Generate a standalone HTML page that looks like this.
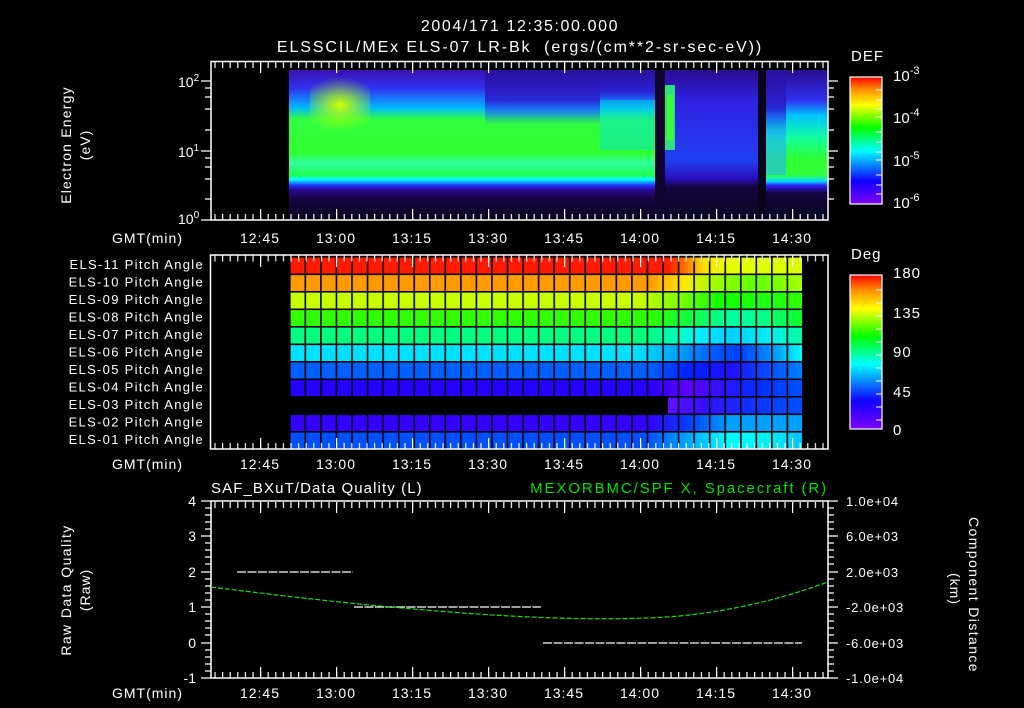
<!DOCTYPE html>
<html><head><meta charset="utf-8"><style>
html,body{margin:0;padding:0;background:#000;width:1024px;height:708px;overflow:hidden}
svg text{font-family:"Liberation Sans",sans-serif;fill:#fff}
</style></head><body>
<svg width="1024" height="708" viewBox="0 0 1024 708" xmlns="http://www.w3.org/2000/svg">
<defs>
<pattern id="tk" x="260" y="0" width="7.6" height="708" patternUnits="userSpaceOnUse"><rect x="0" y="0" width="1.2" height="708" fill="#fff"/></pattern>
<pattern id="grid" x="289" y="256" width="15.55" height="17.5" patternUnits="userSpaceOnUse"><rect x="0" y="0" width="1.6" height="17.5" fill="#000"/><rect x="0" y="0" width="15.55" height="1.6" fill="#000"/></pattern>
<linearGradient id="cb" x1="0" y1="1" x2="0" y2="0">
<stop offset="0" stop-color="#8000ff"/><stop offset="0.18" stop-color="#1000ff"/><stop offset="0.42" stop-color="#00ffff"/><stop offset="0.6" stop-color="#00ff00"/><stop offset="0.78" stop-color="#ffff00"/><stop offset="0.9" stop-color="#ff9000"/><stop offset="1" stop-color="#ff0000"/></linearGradient>
<linearGradient id="sA" x1="0" y1="70" x2="0" y2="220" gradientUnits="userSpaceOnUse">
<stop offset="0" stop-color="#3a12b0"/><stop offset="0.12" stop-color="#3030f0"/><stop offset="0.25" stop-color="#00b8ff"/><stop offset="0.33" stop-color="#30ff40"/><stop offset="0.55" stop-color="#30ff30"/><stop offset="0.62" stop-color="#30ffa0"/><stop offset="0.7" stop-color="#20ff50"/><stop offset="0.73" stop-color="#00ffff"/><stop offset="0.77" stop-color="#2030ff"/><stop offset="0.8" stop-color="#2a0890"/><stop offset="0.86" stop-color="#150540"/><stop offset="1" stop-color="#0c0320"/></linearGradient>
<linearGradient id="ovE" x1="0" y1="0" x2="0" y2="1">
<stop offset="0" stop-color="#2a10a0" stop-opacity="1"/><stop offset="0.55" stop-color="#2a20d0" stop-opacity="0.9"/><stop offset="0.8" stop-color="#2060ff" stop-opacity="0.5"/><stop offset="1" stop-color="#2060ff" stop-opacity="0"/></linearGradient>
<linearGradient id="sC" x1="0" y1="70" x2="0" y2="220" gradientUnits="userSpaceOnUse">
<stop offset="0" stop-color="#2a0c90"/><stop offset="0.2" stop-color="#3020e0"/><stop offset="0.6" stop-color="#2040f0"/><stop offset="0.72" stop-color="#2a10c0"/><stop offset="0.78" stop-color="#120540"/><stop offset="1" stop-color="#0a0320"/></linearGradient>
<linearGradient id="sD" x1="0" y1="70" x2="0" y2="220" gradientUnits="userSpaceOnUse">
<stop offset="0" stop-color="#2a0c90"/><stop offset="0.2" stop-color="#3030f0"/><stop offset="0.3" stop-color="#00c0ff"/><stop offset="0.45" stop-color="#10ffa0"/><stop offset="0.6" stop-color="#30ff30"/><stop offset="0.7" stop-color="#30ff40"/><stop offset="0.74" stop-color="#00e0ff"/><stop offset="0.77" stop-color="#3020ff"/><stop offset="0.82" stop-color="#120540"/><stop offset="1" stop-color="#0a0320"/></linearGradient>
<radialGradient id="yl" cx="340" cy="105" r="40" gradientUnits="userSpaceOnUse" gradientTransform="translate(340 105) scale(1 0.7) translate(-340 -105)"><stop offset="0" stop-color="#d0ff00"/><stop offset="1" stop-color="#a0ff00" stop-opacity="0"/></radialGradient>
<linearGradient id="r0" x1="289" x2="802" gradientUnits="userSpaceOnUse"><stop offset="0.74" stop-color="#ff1a00"/><stop offset="0.77" stop-color="#ff7000"/><stop offset="0.81" stop-color="#ffe000"/><stop offset="0.86" stop-color="#e8ff00"/><stop offset="1" stop-color="#d8ff00"/></linearGradient>
<linearGradient id="r1" x1="289" x2="802" gradientUnits="userSpaceOnUse"><stop offset="0.7" stop-color="#ff9a00"/><stop offset="0.77" stop-color="#ffe800"/><stop offset="0.83" stop-color="#a0ff00"/><stop offset="0.9" stop-color="#60ff00"/><stop offset="0.96" stop-color="#80ff00"/><stop offset="1" stop-color="#a8ff00"/></linearGradient>
<linearGradient id="r2" x1="289" x2="802" gradientUnits="userSpaceOnUse"><stop offset="0.68" stop-color="#c8ff00"/><stop offset="0.76" stop-color="#80ff00"/><stop offset="0.84" stop-color="#10ff00"/><stop offset="0.95" stop-color="#20ff10"/><stop offset="1" stop-color="#30ff00"/></linearGradient>
<linearGradient id="r3" x1="289" x2="802" gradientUnits="userSpaceOnUse"><stop offset="0.7" stop-color="#30ff00"/><stop offset="0.78" stop-color="#10ff40"/><stop offset="0.86" stop-color="#00ffa0"/><stop offset="0.92" stop-color="#00ff90"/><stop offset="1" stop-color="#10ff20"/></linearGradient>
<linearGradient id="r4" x1="289" x2="802" gradientUnits="userSpaceOnUse"><stop offset="0.7" stop-color="#00ff80"/><stop offset="0.76" stop-color="#00ffc0"/><stop offset="0.8" stop-color="#00f0ff"/><stop offset="0.86" stop-color="#00d0ff"/><stop offset="0.94" stop-color="#00f0f0"/><stop offset="1" stop-color="#00ffa0"/></linearGradient>
<linearGradient id="r5" x1="289" x2="802" gradientUnits="userSpaceOnUse"><stop offset="0.68" stop-color="#00e0ff"/><stop offset="0.76" stop-color="#00a0ff"/><stop offset="0.84" stop-color="#0050ff"/><stop offset="0.88" stop-color="#0040ff"/><stop offset="0.95" stop-color="#00a0ff"/><stop offset="1" stop-color="#00ffff"/></linearGradient>
<linearGradient id="r6" x1="289" x2="802" gradientUnits="userSpaceOnUse"><stop offset="0.7" stop-color="#0060ff"/><stop offset="0.78" stop-color="#0020ff"/><stop offset="0.86" stop-color="#2010ff"/><stop offset="0.96" stop-color="#0060ff"/><stop offset="1" stop-color="#0080ff"/></linearGradient>
<linearGradient id="r7" x1="289" x2="802" gradientUnits="userSpaceOnUse"><stop offset="0.7" stop-color="#2500ff"/><stop offset="0.78" stop-color="#6000ff"/><stop offset="0.84" stop-color="#3010ff"/><stop offset="0.92" stop-color="#0030ff"/><stop offset="1" stop-color="#0050ff"/></linearGradient>
<linearGradient id="r8" x1="668" x2="802" gradientUnits="userSpaceOnUse"><stop offset="0" stop-color="#6010ff"/><stop offset="0.3" stop-color="#3010ff"/><stop offset="0.6" stop-color="#1030ff"/><stop offset="1" stop-color="#0050ff"/></linearGradient>
<linearGradient id="r9" x1="289" x2="802" gradientUnits="userSpaceOnUse"><stop offset="0.7" stop-color="#3500ff"/><stop offset="0.78" stop-color="#0040ff"/><stop offset="0.86" stop-color="#00a0ff"/><stop offset="1" stop-color="#00a0ff"/></linearGradient>
<linearGradient id="r10" x1="289" x2="802" gradientUnits="userSpaceOnUse"><stop offset="0.7" stop-color="#0050ff"/><stop offset="0.8" stop-color="#00c0ff"/><stop offset="0.86" stop-color="#00ffff"/><stop offset="0.94" stop-color="#00f0f0"/><stop offset="1" stop-color="#00c0ff"/></linearGradient>
</defs>

<text x="520" y="31" font-size="16" text-anchor="middle" letter-spacing="1.6">2004/171 12:35:00.000</text>
<text x="520" y="52" font-size="16" text-anchor="middle" letter-spacing="1.9" xml:space="preserve">ELSSCIL/MEx ELS-07 LR-Bk  (ergs/(cm**2-sr-sec-eV))</text>

<!-- PANEL 1 spectrogram -->
<rect x="289" y="70" width="366" height="150" fill="url(#sA)"/>
<rect x="485" y="70" width="115" height="55" fill="url(#ovE)"/>
<rect x="600" y="70" width="55" height="40" fill="url(#ovE)"/>
<rect x="600" y="100" width="55" height="50" fill="#00e0e0" opacity="0.45"/>
<rect x="655" y="70" width="10" height="150" fill="#10052c"/>
<rect x="665" y="70" width="10" height="150" fill="url(#sC)"/>
<rect x="665" y="85" width="10" height="65" fill="#30e080"/>
<rect x="667" y="95" width="6" height="45" fill="#40ff30"/>
<rect x="675" y="70" width="83" height="150" fill="url(#sC)"/>
<rect x="758" y="70" width="8" height="150" fill="#08021a"/>
<rect x="766" y="70" width="62" height="150" fill="url(#sD)"/>
<rect x="766" y="70" width="20" height="70" fill="url(#ovE)"/>
<rect x="766" y="130" width="20" height="45" fill="#20b0ff" opacity="0.6"/>
<rect x="310" y="70" width="60" height="70" fill="url(#yl)"/>

<rect x="211" y="61.5" width="617" height="158.5" fill="none" stroke="#fff" stroke-width="1.5"/>
<rect x="211" y="62" width="617" height="6" fill="url(#tk)"/>
<rect x="211" y="214" width="617" height="6" fill="url(#tk)"/>
<g fill="#fff">
<rect x="260" y="62" width="1.2" height="11"/><rect x="336" y="62" width="1.2" height="11"/><rect x="412" y="62" width="1.2" height="11"/><rect x="488" y="62" width="1.2" height="11"/><rect x="564" y="62" width="1.2" height="11"/><rect x="640" y="62" width="1.2" height="11"/><rect x="716" y="62" width="1.2" height="11"/><rect x="792" y="62" width="1.2" height="11"/>
<rect x="260" y="209" width="1.2" height="11"/><rect x="336" y="209" width="1.2" height="11"/><rect x="412" y="209" width="1.2" height="11"/><rect x="488" y="209" width="1.2" height="11"/><rect x="564" y="209" width="1.2" height="11"/><rect x="640" y="209" width="1.2" height="11"/><rect x="716" y="209" width="1.2" height="11"/><rect x="792" y="209" width="1.2" height="11"/>
</g>
<g stroke="#fff" stroke-width="1.2">
<path d="M201 81H211M205 88H211M205 97H211M205 109H211M205 130H211M201 151H211M205 158H211M205 167H211M205 179H211M205 199H211M201 220H211"/>
<path d="M828 81H838M828 88H834M828 97H834M828 109H834M828 130H834M828 151H838M828 158H834M828 167H834M828 179H834M828 199H834"/>
</g>
<text x="178" y="87" font-size="14">10<tspan font-size="10" dy="-6">2</tspan></text>
<text x="178" y="157" font-size="14">10<tspan font-size="10" dy="-6">1</tspan></text>
<text x="178" y="224" font-size="14">10<tspan font-size="10" dy="-6">0</tspan></text>
<text transform="translate(71 145) rotate(-90)" font-size="14" text-anchor="middle" letter-spacing="1.2">Electron Energy</text>
<text transform="translate(90 145) rotate(-90)" font-size="14" text-anchor="middle" letter-spacing="1">(eV)</text>
<g font-size="14" text-anchor="middle" letter-spacing="1">
<text x="183" y="243" text-anchor="end">GMT(min)</text>
<text x="260" y="243">12:45</text><text x="336" y="243">13:00</text><text x="412" y="243">13:15</text><text x="488" y="243">13:30</text><text x="564" y="243">13:45</text><text x="640" y="243">14:00</text><text x="716" y="243">14:15</text><text x="792" y="243">14:30</text>
</g>
<text x="851" y="61" font-size="15" letter-spacing="1">DEF</text>
<rect x="850" y="77" width="32" height="127" fill="url(#cb)" stroke="#fff" stroke-width="1.2"/>
<g stroke="#fff" stroke-width="1"><path d="M876 90H882M876 100H882M876 109H882M876 117H882M876 132H882M876 142H882M876 152H882M876 160H882M876 175H882M876 185H882M876 194H882"/></g>
<text x="893" y="81" font-size="15">10<tspan font-size="11" dy="-7">-3</tspan></text>
<text x="893" y="123" font-size="15">10<tspan font-size="11" dy="-7">-4</tspan></text>
<text x="893" y="166" font-size="15">10<tspan font-size="11" dy="-7">-5</tspan></text>
<text x="893" y="208" font-size="15">10<tspan font-size="11" dy="-7">-6</tspan></text>

<!-- PANEL 2 -->
<rect x="289" y="256" width="513" height="17.5" fill="url(#r0)"/>
<rect x="289" y="273.5" width="513" height="17.5" fill="url(#r1)"/>
<rect x="289" y="291" width="513" height="17.5" fill="url(#r2)"/>
<rect x="289" y="308.5" width="513" height="17.5" fill="url(#r3)"/>
<rect x="289" y="326" width="513" height="17.5" fill="url(#r4)"/>
<rect x="289" y="343.5" width="513" height="17.5" fill="url(#r5)"/>
<rect x="289" y="361" width="513" height="17.5" fill="url(#r6)"/>
<rect x="289" y="378.5" width="513" height="17.5" fill="url(#r7)"/>
<rect x="668" y="396" width="134" height="17.5" fill="url(#r8)"/>
<rect x="289" y="413.5" width="513" height="17.5" fill="url(#r9)"/>
<rect x="289" y="431" width="513" height="17.5" fill="url(#r10)"/>
<rect x="289" y="256" width="514" height="193" fill="url(#grid)"/>
<rect x="802" y="256" width="1.6" height="193" fill="#000"/>
<rect x="210.5" y="255" width="617.5" height="194" fill="none" stroke="#fff" stroke-width="1.5"/>
<rect x="211" y="255.5" width="617" height="6" fill="url(#tk)" opacity="0.95"/>
<rect x="211" y="443" width="617" height="6" fill="url(#tk)" opacity="0.95"/>
<g fill="#fff">
<rect x="260" y="256" width="1.2" height="11"/><rect x="336" y="256" width="1.2" height="11"/><rect x="412" y="256" width="1.2" height="11"/><rect x="488" y="256" width="1.2" height="11"/><rect x="564" y="256" width="1.2" height="11"/><rect x="640" y="256" width="1.2" height="11"/><rect x="716" y="256" width="1.2" height="11"/><rect x="792" y="256" width="1.2" height="11"/>
<rect x="260" y="438" width="1.2" height="11"/><rect x="336" y="438" width="1.2" height="11"/><rect x="412" y="438" width="1.2" height="11"/><rect x="488" y="438" width="1.2" height="11"/><rect x="564" y="438" width="1.2" height="11"/><rect x="640" y="438" width="1.2" height="11"/><rect x="716" y="438" width="1.2" height="11"/><rect x="792" y="438" width="1.2" height="11"/>
</g>
<g font-size="13" text-anchor="end" letter-spacing="1.3">
<text x="204" y="269">ELS-11 Pitch Angle</text>
<text x="204" y="286.5">ELS-10 Pitch Angle</text>
<text x="204" y="304">ELS-09 Pitch Angle</text>
<text x="204" y="321.5">ELS-08 Pitch Angle</text>
<text x="204" y="339">ELS-07 Pitch Angle</text>
<text x="204" y="356.5">ELS-06 Pitch Angle</text>
<text x="204" y="374">ELS-05 Pitch Angle</text>
<text x="204" y="391.5">ELS-04 Pitch Angle</text>
<text x="204" y="409">ELS-03 Pitch Angle</text>
<text x="204" y="426.5">ELS-02 Pitch Angle</text>
<text x="204" y="444">ELS-01 Pitch Angle</text>
</g>
<g font-size="14" text-anchor="middle" letter-spacing="1">
<text x="183" y="469" text-anchor="end">GMT(min)</text>
<text x="260" y="469">12:45</text><text x="336" y="469">13:00</text><text x="412" y="469">13:15</text><text x="488" y="469">13:30</text><text x="564" y="469">13:45</text><text x="640" y="469">14:00</text><text x="716" y="469">14:15</text><text x="792" y="469">14:30</text>
</g>
<text x="851" y="259" font-size="15" letter-spacing="1">Deg</text>
<rect x="850" y="275" width="32" height="154" fill="url(#cb)" stroke="#fff" stroke-width="1.2"/>
<g stroke="#fff" stroke-width="1"><path d="M876 290H882M876 303H882M876 316H882M876 329H882M876 342H882M876 355H882M876 368H882M876 381H882M876 394H882M876 407H882M876 420H882"/></g>
<g font-size="15" letter-spacing="1">
<text x="893" y="278">180</text><text x="893" y="318">135</text><text x="893" y="357">90</text><text x="893" y="397">45</text><text x="893" y="435">0</text>
</g>

<!-- PANEL 3 -->
<text x="211" y="493" font-size="15" letter-spacing="1.1">SAF_BXuT/Data Quality (L)</text>
<text x="828" y="493" font-size="15" letter-spacing="1.9" text-anchor="end" style="fill:#00e000">MEXORBMC/SPF X, Spacecraft (R)</text>
<rect x="211" y="501" width="617" height="177" fill="none" stroke="#fff" stroke-width="1.5"/>
<rect x="211" y="502" width="617" height="6" fill="url(#tk)"/>
<rect x="211" y="672" width="617" height="6" fill="url(#tk)"/>
<g fill="#fff">
<rect x="260" y="502" width="1.2" height="11"/><rect x="336" y="502" width="1.2" height="11"/><rect x="412" y="502" width="1.2" height="11"/><rect x="488" y="502" width="1.2" height="11"/><rect x="564" y="502" width="1.2" height="11"/><rect x="640" y="502" width="1.2" height="11"/><rect x="716" y="502" width="1.2" height="11"/><rect x="792" y="502" width="1.2" height="11"/>
<rect x="260" y="667" width="1.2" height="11"/><rect x="336" y="667" width="1.2" height="11"/><rect x="412" y="667" width="1.2" height="11"/><rect x="488" y="667" width="1.2" height="11"/><rect x="564" y="667" width="1.2" height="11"/><rect x="640" y="667" width="1.2" height="11"/><rect x="716" y="667" width="1.2" height="11"/><rect x="792" y="667" width="1.2" height="11"/>
</g>
<g stroke="#fff" stroke-width="1.2">
<path d="M201 501H211M205 508H211M205 515H211M205 522H211M205 529H211M201 536H211M205 543H211M205 550H211M205 557H211M205 564H211M201 572H211M205 579H211M205 586H211M205 593H211M205 600H211M201 607H211M205 614H211M205 621H211M205 628H211M205 635H211M201 643H211M205 650H211M205 657H211M205 664H211M205 671H211M201 678H211"/>
<path d="M828 501H838M828 508H834M828 515H834M828 522H834M828 529H834M828 536H838M828 543H834M828 550H834M828 557H834M828 564H834M828 572H838M828 579H834M828 586H834M828 593H834M828 600H834M828 607H838M828 614H834M828 621H834M828 628H834M828 635H834M828 643H838M828 650H834M828 657H834M828 664H834M828 671H834M828 678H838"/>
</g>
<g stroke="#fff" stroke-width="1.2" stroke-dasharray="9 1.5">
<path d="M237 572H353"/><path d="M354 607H541"/><path d="M543 643H802"/>
</g>
<path d="M211 587 C 300 598, 360 605, 450 612 C 540 619, 620 621, 680 616 C 740 610, 790 596, 828 582" fill="none" stroke="#10e010" stroke-width="1.2" stroke-dasharray="5 2"/>
<g font-size="14" text-anchor="end">
<text x="196" y="506">4</text><text x="196" y="541">3</text><text x="196" y="577">2</text><text x="196" y="612">1</text><text x="196" y="648">0</text><text x="196" y="683">-1</text>
</g>
<g font-size="13" letter-spacing="0.8">
<text x="846" y="506">1.0e+04</text><text x="846" y="541">6.0e+03</text><text x="846" y="577">2.0e+03</text><text x="846" y="612">-2.0e+03</text><text x="846" y="648">-6.0e+03</text><text x="846" y="683">-1.0e+04</text>
</g>
<text transform="translate(71 590) rotate(-90)" font-size="14" text-anchor="middle" letter-spacing="1.4">Raw Data Quality</text>
<text transform="translate(90 590) rotate(-90)" font-size="14" text-anchor="middle" letter-spacing="1">(Raw)</text>
<text transform="translate(969 595) rotate(90)" font-size="14" text-anchor="middle" letter-spacing="1.4">Component Distance</text>
<text transform="translate(950 589) rotate(90)" font-size="14" text-anchor="middle" letter-spacing="1">(km)</text>
<g font-size="14" text-anchor="middle" letter-spacing="1">
<text x="183" y="698" text-anchor="end">GMT(min)</text>
<text x="260" y="698">12:45</text><text x="336" y="698">13:00</text><text x="412" y="698">13:15</text><text x="488" y="698">13:30</text><text x="564" y="698">13:45</text><text x="640" y="698">14:00</text><text x="716" y="698">14:15</text><text x="792" y="698">14:30</text>
</g>
</svg>
</body></html>
